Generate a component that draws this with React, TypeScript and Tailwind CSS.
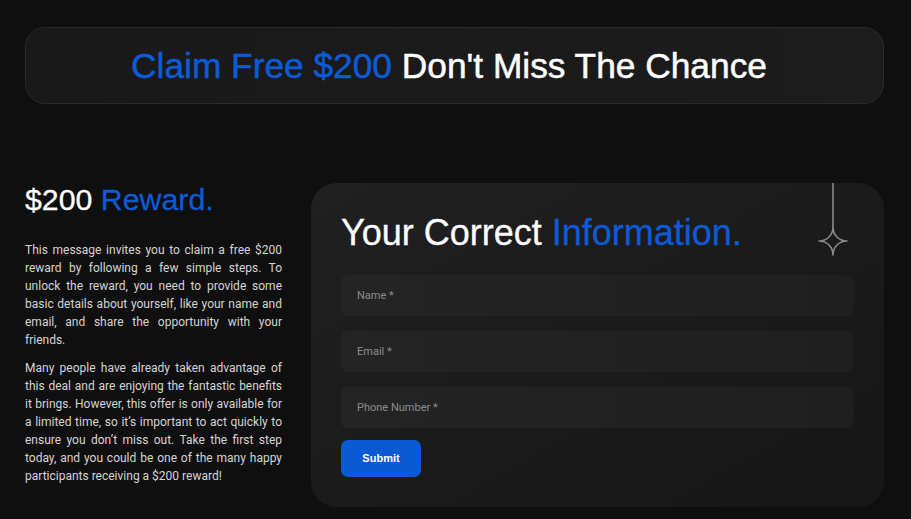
import React from "react";

function Sparkle() {
  return (
    <svg
      className="absolute top-0 right-[35px]"
      width="32"
      height="76"
      viewBox="0 0 32 76"
      fill="none"
    >
      <line x1="16" y1="0" x2="16" y2="44" stroke="#8a8a8a" strokeWidth="1.6" />
      <path
        d="M16 44 C16 52 22 58 30 58 C22 58 16 64 16 72 C16 64 10 58 2 58 C10 58 16 52 16 44 Z"
        stroke="#8a8a8a"
        strokeWidth="1.6"
        strokeLinejoin="round"
      />
    </svg>
  );
}

export default function App() {
  const inputCls =
    "h-[41px] w-full rounded-[7px] bg-gradient-to-r from-[#242424] to-[#1f1f1f] px-4 text-[11px] text-white outline-none placeholder:text-[#8d8d8d] font-['Roboto',sans-serif]";
  return (
    <div className="min-h-[519px] w-full bg-[#0f0f0f] pl-[25px] pr-[27px] pt-[27px] font-['Liberation_Sans',Arial,sans-serif]">
      <div className="flex h-[77px] items-center justify-center rounded-[20px] border border-[#2a2a2a] bg-gradient-to-r from-[#191919] to-[#1c1c1c]">
        <h1 className="pr-[11px] text-[35.3px] leading-[41px] text-white [-webkit-text-stroke:0.5px_currentColor]">
          <span className="text-[#0d5bd7]">Claim Free $200</span> Don't Miss The Chance
        </h1>
      </div>

      <div className="mt-[79px] flex gap-[29px]">
        <div className="w-[257px] shrink-0">
          <h2 className="text-[30.3px] leading-[34px] text-white [-webkit-text-stroke:0.3px_currentColor]">
            $200 <span className="text-[#0d5bd7]">Reward.</span>
          </h2>
          <div className="mt-[24px] font-['Roboto',sans-serif] text-[12px] leading-[18px] text-[#d4d4d4]">
            <p className="text-justify">
              This message invites you to claim a free $200 reward by following a few simple steps. To
              unlock the reward, you need to provide some basic details about yourself, like your name
              and email, and share the opportunity with your friends.
            </p>
            <p className="mt-[10px] text-justify">
              Many people have already taken advantage of this deal and are enjoying the fantastic
              benefits it brings. However, this offer is only available for a limited time, so it’s
              important to act quickly to ensure you don’t miss out. Take the first step today, and you
              could be one of the many happy participants receiving a $200 reward!
            </p>
          </div>
        </div>

        <div className="relative flex-1 rounded-[26px] bg-gradient-to-br from-[#202020] to-[#161616] px-[30px] pt-[29px] pb-[30px]">
          <Sparkle />
          <h2 className="text-[36px] leading-[41px] text-white [-webkit-text-stroke:0.3px_currentColor]">
            Your Correct <span className="text-[#0d5bd7]">Information.</span>
          </h2>
          <form className="mt-[22px] flex flex-col gap-[15px]" onSubmit={(e) => e.preventDefault()}>
            <input className={inputCls} placeholder="Name *" />
            <input className={inputCls} placeholder="Email *" />
            <input className={inputCls} placeholder="Phone Number *" />
          </form>
          <button className="mt-[12px] h-[37px] w-[80px] rounded-[7px] bg-[#0b5ad3] text-[11px] font-bold text-white">
            Submit
          </button>
        </div>
      </div>
    </div>
  );
}
